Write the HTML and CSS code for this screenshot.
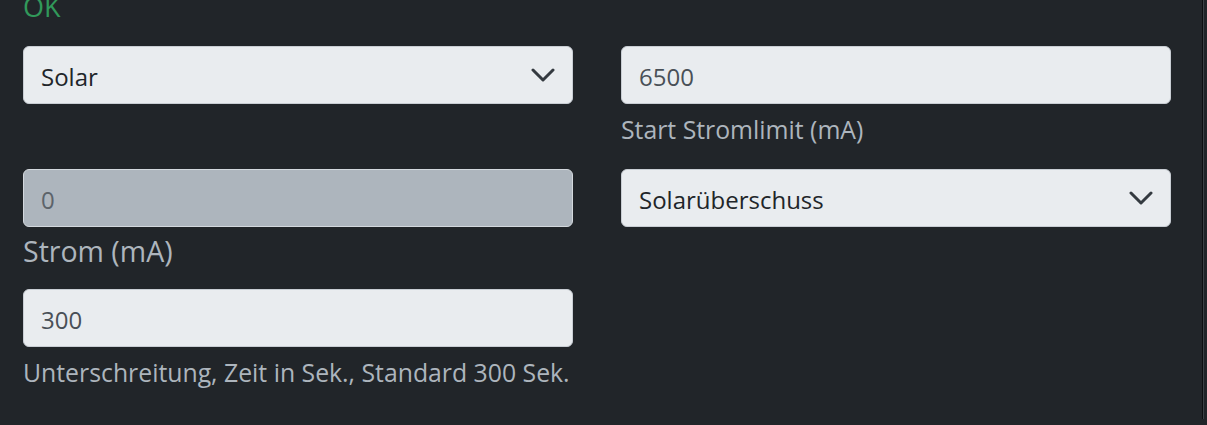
FILE: index.html
```html
<!DOCTYPE html>
<html lang="de">
<head>
<meta charset="utf-8">
<title>Laden</title>
<link rel="stylesheet" href="styles.css">
</head>
<body>
<div class="page">
  <div class="status">OK</div>

  <div class="row row-1">
    <div class="field">
      <div class="select">
        <span class="select-value">Solar</span>
        <svg class="chevron" width="24" height="14" viewBox="0 0 24 14" aria-hidden="true"><path d="M2 2 L12 12 L22 2" fill="none" stroke="#343a40" stroke-width="3" stroke-linecap="round" stroke-linejoin="round"/></svg>
      </div>
    </div>
    <div class="field">
      <div class="input">6500</div>
      <div class="help">Start Stromlimit (mA)</div>
    </div>
  </div>

  <div class="row row-2">
    <div class="field">
      <div class="input input-disabled">0</div>
      <div class="label">Strom (mA)</div>
    </div>
    <div class="field">
      <div class="select">
        <span class="select-value">Solarüberschuss</span>
        <svg class="chevron" width="24" height="14" viewBox="0 0 24 14" aria-hidden="true"><path d="M2 2 L12 12 L22 2" fill="none" stroke="#343a40" stroke-width="3" stroke-linecap="round" stroke-linejoin="round"/></svg>
      </div>
    </div>
  </div>

  <div class="row row-3">
    <div class="field">
      <div class="input">300</div>
      <div class="help">Unterschreitung, Zeit in Sek., Standard 300 Sek.</div>
    </div>
    <div class="field"></div>
  </div>
</div>
</body>
</html>
```

FILE: styles.css
```css
html, body {
  margin: 0;
  padding: 0;
}

body {
  background: #212529;
  font-family: "Open Sans", "Noto Sans", sans-serif;
  height: 425px;
  overflow: hidden;
}

.page {
  box-sizing: border-box;
  width: 1203px;
  height: 425px;
  padding-left: 23px;
  border-right: 1px solid #0d0f11;
  box-shadow: 1px 0 0 #3d4247;
}

.status {
  color: #31995a;
  font-size: 27px;
  line-height: 26px;
  height: 26px;
  margin-top: -6px;
}

.row {
  display: grid;
  grid-template-columns: 550px 550px;
  column-gap: 48px;
  align-items: start;
}

.row-1 { margin-top: 26px; }
.row-2 { margin-top: 22px; }
.row-3 { margin-top: 17px; }

.field {
  display: flex;
  flex-direction: column;
}

.input,
.select {
  box-sizing: border-box;
  height: 58px;
  border: 1px solid #c8cdd3;
  border-radius: 6px;
  background: #e9ecef;
  font-size: 24px;
  line-height: 53px;
  padding: 3px 17px 0 17px;
  color: #495057;
}

.select {
  display: flex;
  align-items: center;
  justify-content: space-between;
  color: #212529;
  padding-right: 17px;
}

.chevron {
  display: block;
  margin-top: -3px;
}

.input-disabled {
  background: #adb5bd;
  border-color: #d3d8dd;
  color: #5c636a;
}

.help {
  color: #adb5bd;
  font-size: 24.8px;
  line-height: 36px;
  margin-top: 7px;
}

.label {
  color: #adb5bd;
  font-size: 28.5px;
  line-height: 42px;
  margin-top: 3px;
}
```
